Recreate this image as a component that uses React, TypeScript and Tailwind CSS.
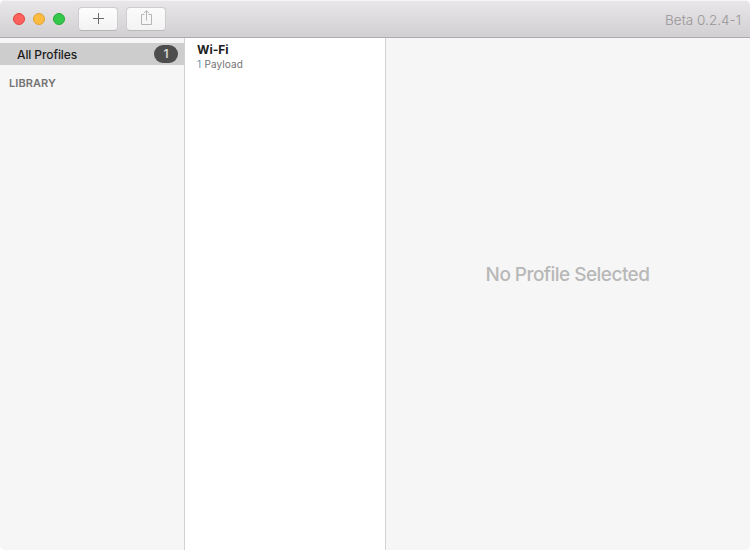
function TitleBar() {
  return (
    <header className="flex h-[38px] shrink-0 items-center border-b border-[#adabad] bg-gradient-to-b from-[#e9e7e9] to-[#d1cfd1] pl-[13px] pr-[9px] shadow-[inset_0_1px_0_#f5f4f5]">
      <div className="flex gap-2">
        <span className="size-3 rounded-full border border-[#e2463f] bg-[#fc615d]" />
        <span className="size-3 rounded-full border border-[#dfa133] bg-[#fdbc40]" />
        <span className="size-3 rounded-full border border-[#27aa35] bg-[#34c84a]" />
      </div>
      <div className="ml-[13px] flex gap-2">
        <button aria-label="Add" className="flex h-6 w-10 items-center justify-center rounded-[4px] border border-[#cfcdcf] border-b-[#b8b6b8] bg-gradient-to-b from-[#fefefe] to-[#f3f3f3]">
          <svg width="12" height="12" viewBox="0 0 12 12" stroke="#6b6b6b" fill="none" className="-mt-[2px]">
            <path d="M6.5 1v11M1 6.5h11" />
          </svg>
        </button>
        <button aria-label="Share" className="flex h-6 w-10 items-center justify-center rounded-[4px] border border-[#cfcdcf] border-b-[#bbb9bb] bg-gradient-to-b from-[#fbfbfb] to-[#f3f3f3]">
          <svg width="12" height="16" viewBox="0 0 12 16" stroke="#b5b5b5" fill="none" className="-mt-[2px]">
            <path d="M4.5 4.5h-3v10h10v-10h-3M6.5 10.5V.7M4 3.2 6.5.7 9 3.2" />
          </svg>
        </button>
      </div>
      <span className="ml-auto mt-[3px] text-[13.5px] font-light leading-4 tracking-[0.02px] text-[#989698]">Beta 0.2.4-1</span>
    </header>
  );
}

function Sidebar() {
  return (
    <nav className="w-[185px] shrink-0 border-r border-[#d2d2d2] bg-[#f6f6f6] pt-[5px]">
      <div className="flex h-[22px] items-center bg-[#cdcdcd] pl-[17px] pr-[6px]">
        <span className="mt-[2px] text-[12px] font-medium leading-4 tracking-[-0.1px] text-[#1c1c1c]">All Profiles</span>
        <span className="ml-auto flex h-[18px] w-6 items-center justify-center rounded-full bg-[#4d4d4d] text-[12px] font-semibold text-[#d4d4d4]">1</span>
      </div>
      <h2 className="mt-[10px] pl-[9px] text-[11px] font-semibold leading-4 tracking-[0.06px] text-[#747474]">LIBRARY</h2>
    </nav>
  );
}

function ProfileList() {
  return (
    <section className="w-[201px] shrink-0 border-r border-[#d2d2d2] bg-white pl-3 pt-[4px]">
      <h3 className="text-[12px] font-bold leading-4 text-[#202020]">Wi-Fi</h3>
      <p className="-mt-px text-[10px] leading-[14px] tracking-[0.08px] text-[#747474]"><span className="mr-[0.5px] text-[#6796ad]">1</span> Payload</p>
    </section>
  );
}

export default function App() {
  return (
    <div className="h-[550px] w-[750px] bg-white font-['Inter','Liberation_Sans',sans-serif]">
      <div className="flex h-full flex-col overflow-hidden rounded-[5px]">
        <TitleBar />
        <div className="flex min-h-0 flex-1">
          <Sidebar />
          <ProfileList />
          <main className="flex flex-1 items-center justify-center bg-[#f6f6f6] pb-[39px] pr-px">
            <p className="text-[19px] font-[450] leading-6 tracking-[-0.54px] text-[#b8b8b8]">No Profile Selected</p>
          </main>
        </div>
      </div>
    </div>
  );
}
